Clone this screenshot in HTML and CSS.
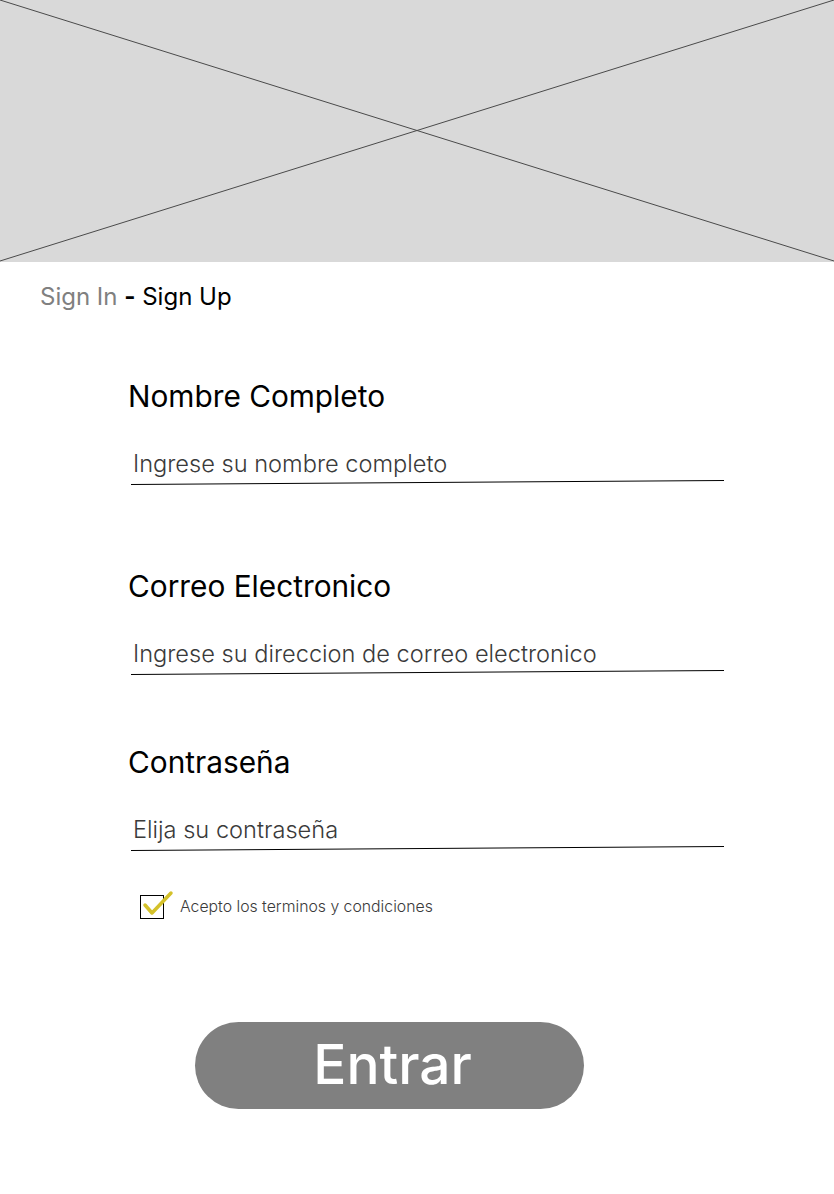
FILE: index.html
```html
<!DOCTYPE html>
<html lang="es">
<head>
<meta charset="utf-8">
<title>Sign Up</title>
<link rel="stylesheet" href="styles.css">
</head>
<body>
<header class="hero">
  <svg class="hero-x" viewBox="0 0 834 262" preserveAspectRatio="none" aria-hidden="true">
    <line x1="0" y1="0" x2="834" y2="261" />
    <line x1="834" y1="0" x2="0" y2="261" />
  </svg>
</header>

<nav class="tabs">
  <span class="tab-inactive">Sign In</span>
  <span class="tab-sep">-</span>
  <span class="tab-active">Sign Up</span>
</nav>

<form class="form">
  <div class="field field-first">
    <label class="field-label">Nombre Completo</label>
    <div class="field-input">Ingrese su nombre completo</div>
    <svg class="underline" viewBox="0 0 593 5" preserveAspectRatio="none" aria-hidden="true"><line x1="0" y1="4.5" x2="593" y2="0.5" /></svg>
  </div>
  <div class="field field-second">
    <label class="field-label">Correo Electronico</label>
    <div class="field-input">Ingrese su direccion de correo electronico</div>
    <svg class="underline" viewBox="0 0 593 5" preserveAspectRatio="none" aria-hidden="true"><line x1="0" y1="4.5" x2="593" y2="0.5" /></svg>
  </div>
  <div class="field field-third">
    <label class="field-label">Contraseña</label>
    <div class="field-input">Elija su contraseña</div>
    <svg class="underline" viewBox="0 0 593 5" preserveAspectRatio="none" aria-hidden="true"><line x1="0" y1="4.5" x2="593" y2="0.5" /></svg>
  </div>

  <div class="terms">
    <span class="checkbox">
      <svg class="check" viewBox="0 0 32 28" aria-hidden="true"><path d="M3 13 L10 21 L29 1" /></svg>
    </span>
    <span class="terms-text">Acepto los terminos y condiciones</span>
  </div>

  <div class="actions">
    <button type="button" class="btn-primary">Entrar</button>
  </div>
</form>
</body>
</html>
```

FILE: styles.css
```css
* { box-sizing: border-box; }

html, body {
  margin: 0;
  padding: 0;
  background: #ffffff;
}

body {
  font-family: Inter, "Noto Sans", "Liberation Sans", sans-serif;
  color: #000;
  width: 834px;
  height: 1194px;
  overflow: hidden;
}

.hero {
  height: 262px;
  background: #d9d9d9;
}

.hero-x {
  display: block;
  width: 100%;
  height: 100%;
}

.hero-x line {
  stroke: #4a4a4a;
  stroke-width: 1;
}

.tabs {
  margin-top: 21px;
  padding-left: 40px;
  font-size: 24px;
  line-height: 28px;
  height: 28px;
  white-space: nowrap;
}

.tab-inactive { color: #808080; }
.tab-sep { font-weight: 700; color: #000; }
.tab-active { color: #000; }

.form {
  padding-left: 128px;
  display: flex;
  flex-direction: column;
}

.field {
  display: flex;
  flex-direction: column;
  width: 596px;
}

.field-first { margin-top: 67px; }
.field-second { margin-top: 83px; }
.field-third { margin-top: 69px; }

.field-label {
  font-size: 29.8px;
  line-height: 36px;
  color: #000;
}

.field-input {
  margin-top: 36px;
  padding-left: 5px;
  font-size: 23.6px;
  line-height: 28px;
  font-weight: 300;
  font-variation-settings: "wght" 300;
  color: #3a3a3a;
  white-space: nowrap;
}

.underline {
  display: block;
  margin-top: 2px;
  margin-left: 3px;
  width: 593px;
  height: 5px;
  overflow: visible;
}

.underline line {
  stroke: #000;
  stroke-width: 1;
}

.terms {
  margin-top: 44px;
  margin-left: 12px;
  display: flex;
  align-items: center;
  gap: 16px;
}

.checkbox {
  position: relative;
  width: 24px;
  height: 24px;
  border: 1px solid #000;
  flex: none;
}

.check {
  position: absolute;
  left: 1px;
  top: -4px;
  width: 32px;
  height: 28px;
  overflow: visible;
}

.check path {
  fill: none;
  stroke: #d4c12a;
  stroke-width: 3.5;
  stroke-linecap: round;
  stroke-linejoin: round;
}

.terms-text {
  font-size: 15.8px;
  font-weight: 300;
  font-variation-settings: "wght" 300;
  color: #3a3a3a;
  line-height: 20px;
}

.actions {
  margin-top: 103px;
  padding-left: 67px;
}

.btn-primary {
  display: flex;
  align-items: center;
  justify-content: center;
  width: 389px;
  height: 87px;
  border: none;
  border-radius: 44px;
  background: #808080;
  color: #fff;
  font-family: Inter, "Noto Sans", "Liberation Sans", sans-serif;
  font-size: 55px;
  font-weight: 500;
  padding: 0 0 4px 6px;
  cursor: pointer;
}
```
